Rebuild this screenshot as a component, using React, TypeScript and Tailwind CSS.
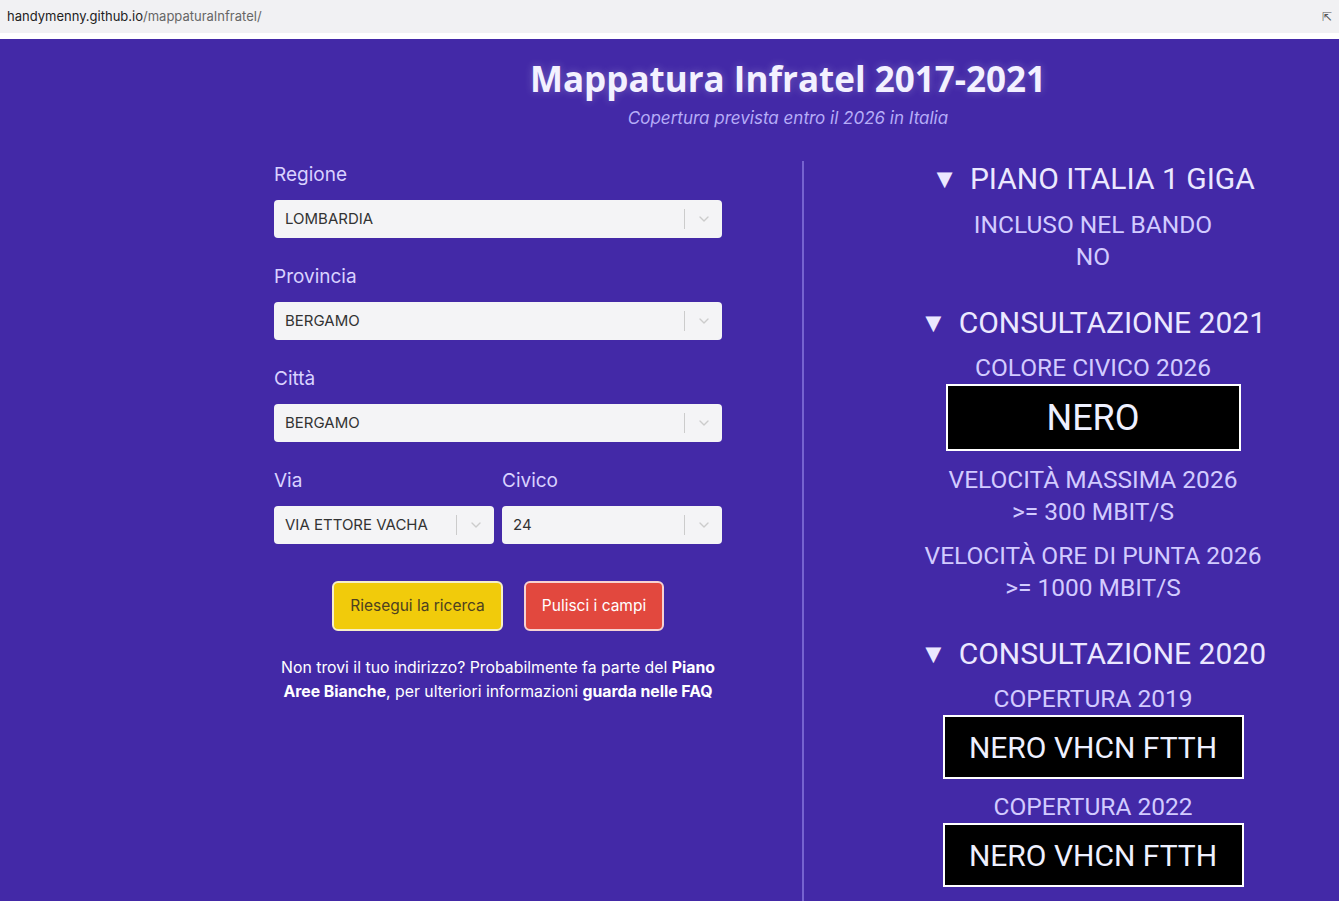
import { ChevronDown } from "lucide-react";

// Select-like field
const Field = ({ value, className = "" }: { value: string; className?: string }) => (
  <div
    className={`flex h-[38px] items-center rounded-[4px] bg-[#f4f4f6] pl-[11px] text-[15px] text-[#333333] ${className}`}
  >
    <span className="flex-1 truncate">{value}</span>
    <span className="h-[20px] w-px bg-[#cccccc]" />
    <span className="flex w-[37px] items-center justify-center">
      <ChevronDown className="h-[16px] w-[16px] text-[#cccccc]" strokeWidth={2} />
    </span>
  </div>
);

const Label = ({ children }: { children: React.ReactNode }) => (
  <div className="text-[19px] leading-[24px] text-[#d9d2ff]">{children}</div>
);

const Heading = ({ children, className = "" }: { children: React.ReactNode; className?: string }) => (
  <div className={`flex h-[36px] items-center text-[30px] leading-[36px] text-[#ebe8ff] ${className}`}>
    <span className="mr-[12px] inline-block text-[27px] leading-none">▼</span>
    <span>{children}</span>
  </div>
);

const Item = ({ children, className = "" }: { children: React.ReactNode; className?: string }) => (
  <div className={`text-[24.5px] leading-[32px] text-[#d2cbff] ${className}`}>{children}</div>
);

const BlackBox = ({ text, className = "" }: { text: string; className?: string }) => (
  <div
    className={`flex items-center justify-center border-2 border-white bg-black text-[#eef0ff] ${className}`}
  >
    {text}
  </div>
);

export default function App() {
  return (
    <div className="min-h-[901px] w-full overflow-hidden bg-[#4329a7] font-['Inter',sans-serif]">
      {/* browser address bar */}
      <div className="flex h-[33px] items-center justify-between bg-[#f1f1f3] px-[7px] text-[13px]">
        <span>
          <span className="text-[#222222]">handymenny.github.io</span>
          <span className="text-[#666666]">/mappaturaInfratel/</span>
        </span>
        <span className="text-[12px] text-[#555555]">⇱</span>
      </div>
      <div className="h-[6px] bg-white" />

      {/* title */}
      <div className="pl-[237px] pt-[17px] text-center">
        <h1 className="font-['Open_Sans',sans-serif] text-[35px] font-bold leading-[46px] text-[#f3f1ff] [text-shadow:0_0_8px_rgba(255,255,255,0.25)]">
          Mappatura Infratel 2017-2021
        </h1>
        <p className="mt-[5px] text-[17px] italic leading-[22px] text-[#b6adf8]">
          Copertura prevista entro il 2026 in Italia
        </p>
      </div>

      <div className="mt-[32px] flex pl-[274px]">
        {/* left form */}
        <div className="w-[448px] shrink-0 pt-[2px]">
          <Label>Regione</Label>
          <Field value="LOMBARDIA" className="mt-[13px]" />
          <div className="mt-[27px]">
            <Label>Provincia</Label>
          </div>
          <Field value="BERGAMO" className="mt-[13px]" />
          <div className="mt-[27px]">
            <Label>Città</Label>
          </div>
          <Field value="BERGAMO" className="mt-[13px]" />
          <div className="mt-[27px] flex gap-[8px]">
            <div className="flex-1">
              <Label>Via</Label>
              <Field value="VIA ETTORE VACHA" className="mt-[13px]" />
            </div>
            <div className="flex-1">
              <Label>Civico</Label>
              <Field value="24" className="mt-[13px]" />
            </div>
          </div>

          <div className="mt-[37px] flex justify-center gap-[21px]">
            <button className="h-[50px] w-[171px] rounded-[6px] border-2 border-[#f6efc8] bg-[#f1cb0b] text-[15.5px] text-[#4d4120]">
              Riesegui la ricerca
            </button>
            <button className="h-[50px] w-[140px] rounded-[6px] border-2 border-[#f6d2d2] bg-[#e2483e] text-[15.5px] text-white">
              Pulisci i campi
            </button>
          </div>

          <p className="mt-[25px] text-center text-[15.8px] leading-[24px] text-white">
            Non trovi il tuo indirizzo? Probabilmente fa parte del <b>Piano</b>
            <br />
            <b>Aree Bianche</b>, per ulteriori informazioni <b>guarda nelle FAQ</b>
          </p>
        </div>

        {/* divider */}
        <div className="ml-[80px] min-h-[745px] w-[2px] shrink-0 bg-[#7663cf]" />

        {/* right results */}
        <div className="flex w-[578px] shrink-0 flex-col items-center font-['Roboto',sans-serif] text-center">
          <Heading>PIANO ITALIA 1 GIGA</Heading>
          <Item className="mt-[12px]">INCLUSO NEL BANDO</Item>
          <Item>NO</Item>

          <Heading className="mt-[32px]">CONSULTAZIONE 2021</Heading>
          <Item className="mt-[11px]">COLORE CIVICO 2026</Item>
          <BlackBox text="NERO" className="h-[67px] w-[295px] text-[36px]" />
          <Item className="mt-[13px]">VELOCITÀ MASSIMA 2026</Item>
          <Item>&gt;= 300 MBIT/S</Item>
          <Item className="mt-[12px]">VELOCITÀ ORE DI PUNTA 2026</Item>
          <Item>&gt;= 1000 MBIT/S</Item>

          <Heading className="mt-[32px]">CONSULTAZIONE 2020</Heading>
          <Item className="mt-[11px]">COPERTURA 2019</Item>
          <BlackBox text="NERO VHCN FTTH" className="h-[64px] w-[301px] text-[30px]" />
          <Item className="mt-[12px]">COPERTURA 2022</Item>
          <BlackBox text="NERO VHCN FTTH" className="h-[64px] w-[301px] text-[30px]" />
        </div>
      </div>
    </div>
  );
}
